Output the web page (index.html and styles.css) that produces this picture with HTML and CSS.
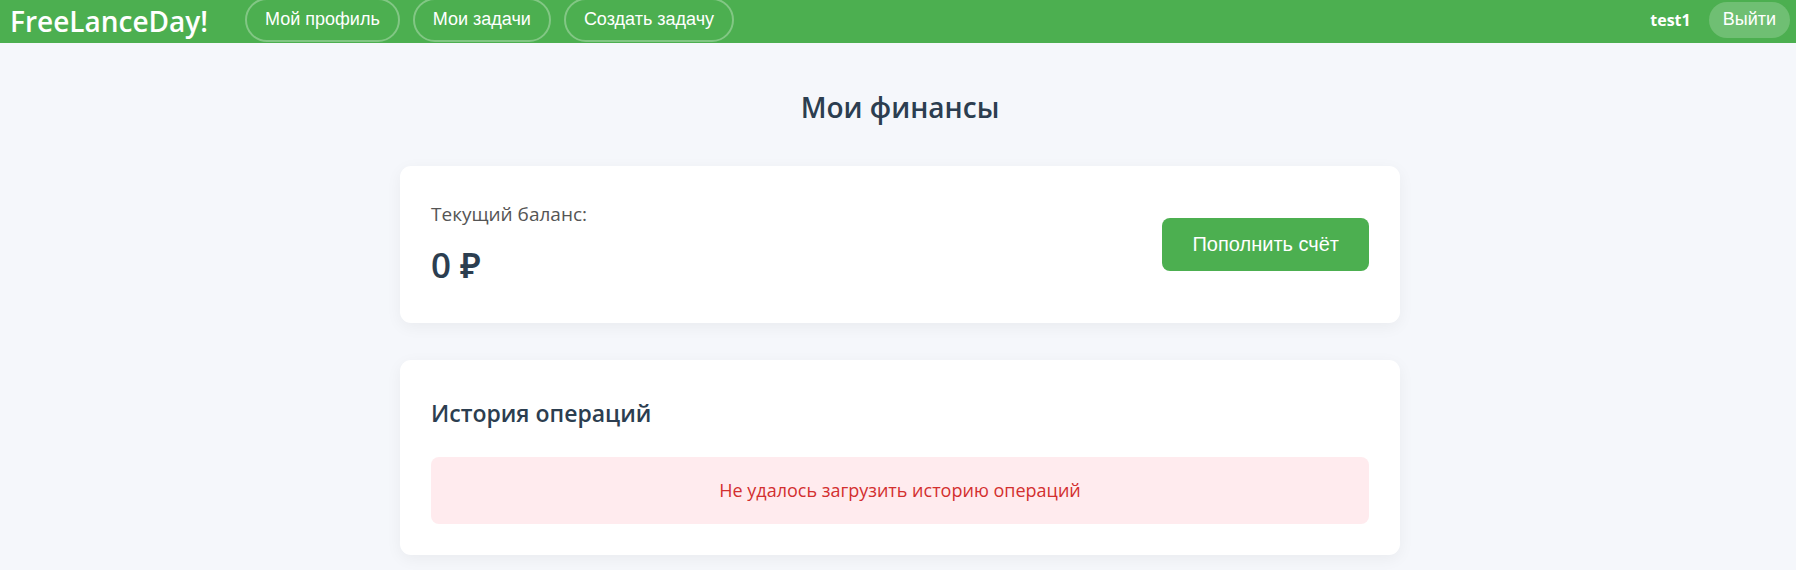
FILE: index.html
```html
<!DOCTYPE html>
<html lang="ru">
<head>
<meta charset="utf-8">
<meta name="viewport" content="width=device-width, initial-scale=1">
<title>FreeLanceDay! — Мои финансы</title>
<link rel="stylesheet" href="styles.css">
</head>
<body>
<header class="topbar">
  <a class="logo" href="#">FreeLanceDay!</a>
  <nav class="nav">
    <button class="nav-button" type="button">Мой профиль</button>
    <button class="nav-button" type="button">Мои задачи</button>
    <button class="nav-button" type="button">Создать задачу</button>
  </nav>
  <div class="user">
    <span class="user-name">test1</span>
    <button class="logout" type="button">Выйти</button>
  </div>
</header>
<main class="page">
  <h1 class="page-title">Мои финансы</h1>
  <section class="card balance">
    <div class="balance-info">
      <p class="balance-label">Текущий баланс:</p>
      <p class="balance-value">0 ₽</p>
    </div>
    <button class="primary" type="button">Пополнить счёт</button>
  </section>
  <section class="card history">
    <h2 class="card-title">История операций</h2>
    <p class="error" role="alert">Не удалось загрузить историю операций</p>
  </section>
</main>
</body>
</html>
```
FILE: styles.css
```css
* {
  box-sizing: border-box;
}

body {
  margin: 0;
  background: #f5f7fb;
  color: #2c3e50;
  font-family: "Segoe UI", "Open Sans", "Noto Sans", sans-serif;
}

button {
  font-family: Arial, "Liberation Sans", sans-serif;
  color: #fff;
  border: 0;
  cursor: pointer;
  white-space: nowrap;
}

.topbar {
  display: flex;
  align-items: center;
  height: 43px;
  padding: 0 6px 4px 10px;
  background: #4caf50;
  color: #fff;
}

.logo {
  padding-top: 2px;
  color: #fff;
  font-size: 28px;
  font-weight: 600;
  line-height: 36px;
  text-decoration: none;
}

.nav {
  display: flex;
  gap: 13px;
  margin-left: 37px;
}

.nav-button {
  height: 44px;
  padding: 0 18px;
  border: 2px solid rgba(255, 255, 255, 0.3);
  border-radius: 27px;
  background: transparent;
  font-size: 18px;
}

.user {
  display: flex;
  align-items: center;
  gap: 18px;
  margin-left: auto;
}

.user-name {
  font-size: 16px;
  font-weight: 700;
}

.logout {
  height: 36px;
  padding: 0 14px;
  border-radius: 22px;
  background: rgba(255, 255, 255, 0.2);
  font-size: 18px;
}

.page {
  max-width: 1004px;
  margin: 0 auto;
  padding: 43px 0 15px 4px;
}

.page-title {
  margin: 0 0 38px;
  font-size: 28px;
  font-weight: 600;
  line-height: 42px;
  text-align: center;
}

.card {
  padding: 31px;
  border-radius: 11px;
  background: #fff;
  box-shadow: 0 4px 16px rgba(0, 0, 0, 0.05);
}

.balance {
  display: flex;
  align-items: center;
  justify-content: space-between;
  margin-bottom: 37px;
}

.balance-label {
  margin: 0 0 10px;
  color: #555;
  font-size: 19px;
  line-height: 35px;
}

.balance-value {
  margin: 0;
  padding-bottom: 4px;
  font-size: 35px;
  font-weight: 600;
  line-height: 46px;
}

.primary {
  padding: 16px 30px;
  border-radius: 8px;
  background: #4caf50;
  font-size: 20px;
  line-height: 21px;
}

.card-title {
  margin: 0 0 22px;
  font-size: 23px;
  font-weight: 600;
  line-height: 44px;
}

.error {
  margin: 0;
  padding: 18px;
  border-radius: 8px;
  background: #ffebee;
  color: #d32f2f;
  font-size: 18px;
  line-height: 31px;
  text-align: center;
}
```
